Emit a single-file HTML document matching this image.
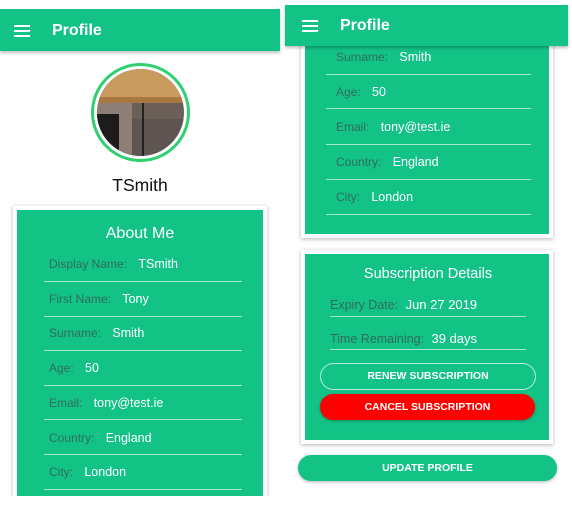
<!DOCTYPE html>
<html><head><style>
body{margin:0;width:572px;height:516px;background:#fff;position:relative;overflow:hidden;font-family:"Liberation Sans",Arial,sans-serif}
.a{position:absolute}
.hdr{background:#13c386;box-shadow:0 2px 3px rgba(0,0,0,.25);color:#fff;font-weight:bold;font-size:16px}
.hb{position:absolute;width:16px;height:2px;background:#fff}
.card{background:#13c386;border:4px solid #fff;box-shadow:0 1px 4px rgba(0,0,0,.3)}
.lab{position:absolute;font-size:12px;color:#2f6e58;white-space:nowrap}
.lab b{font-weight:normal;color:#fff;margin-left:8px;font-size:12.5px}
.ln{position:absolute;height:1px;background:rgba(255,255,255,.6)}
.btn{position:absolute;border-radius:14px;color:#fff;font-weight:bold;font-size:10.5px;text-align:center}
</style></head><body>
<div class="a card" style="left:13px;top:206px;width:246px;height:296px;"></div>
<div class="a" style="left:140px;top:225px;transform:translateX(-50%);color:#fff;font-size:16px;white-space:nowrap">About Me</div>
<div class="lab" style="left:49px;top:257px">Display Name: <b>TSmith</b></div>
<div class="ln" style="left:44px;top:281px;width:198px"></div>
<div class="lab" style="left:49px;top:292px">First Name: <b>Tony</b></div>
<div class="ln" style="left:44px;top:316px;width:198px"></div>
<div class="lab" style="left:49px;top:326px">Surname: <b>Smith</b></div>
<div class="ln" style="left:44px;top:350px;width:198px"></div>
<div class="lab" style="left:49px;top:361px">Age: <b>50</b></div>
<div class="ln" style="left:44px;top:385px;width:198px"></div>
<div class="lab" style="left:49px;top:396px">Email: <b>tony@test.ie</b></div>
<div class="ln" style="left:44px;top:419px;width:198px"></div>
<div class="lab" style="left:49px;top:431px">Country: <b>England</b></div>
<div class="ln" style="left:44px;top:454px;width:198px"></div>
<div class="lab" style="left:49px;top:465px">City: <b>London</b></div>
<div class="ln" style="left:44px;top:489px;width:198px"></div>
<div class="a" style="left:0;top:496px;width:285px;height:20px;background:#fff"></div>
<div class="a hdr" style="left:0;top:9px;width:280px;height:42px">
 <div class="hb" style="left:14px;top:16px"></div><div class="hb" style="left:14px;top:21px"></div><div class="hb" style="left:14px;top:26px"></div>
 <div class="a" style="left:52px;top:13px">Profile</div>
</div>
<div class="a" style="left:91px;top:63px;width:93px;height:93px;border-radius:50%;border:3px solid #2fd06f;background:#fff"></div>
<div class="a" style="left:97px;top:69px;width:87px;height:87px;border-radius:50%;overflow:hidden;background:#6b5f58">
 <div class="a" style="left:0;top:0;width:87px;height:28px;background:#c99a5e"></div>
 <div class="a" style="left:0;top:28px;width:87px;height:6px;background:#a8773f"></div>
 <div class="a" style="left:0;top:34px;width:35px;height:53px;background:#8d7e78"></div>
 <div class="a" style="left:0;top:45px;width:22px;height:42px;background:#1d1b1b"></div>
 <div class="a" style="left:35px;top:50px;width:52px;height:37px;background:#5e5552"></div>
 <div class="a" style="left:45px;top:34px;width:2px;height:53px;background:#222"></div>
</div>
<div class="a" style="left:140px;top:175px;transform:translateX(-50%);font-size:17.5px;color:#111">TSmith</div>

<div class="a card" style="left:301px;top:20px;width:244px;height:210px"></div>
<div class="lab" style="left:336px;top:50px">Surname: <b>Smith</b></div>
<div class="ln" style="left:326px;top:74px;width:205px"></div>
<div class="lab" style="left:336px;top:85px">Age: <b>50</b></div>
<div class="ln" style="left:326px;top:108px;width:205px"></div>
<div class="lab" style="left:336px;top:120px">Email: <b>tony@test.ie</b></div>
<div class="ln" style="left:326px;top:144px;width:205px"></div>
<div class="lab" style="left:336px;top:155px">Country: <b>England</b></div>
<div class="ln" style="left:326px;top:179px;width:205px"></div>
<div class="lab" style="left:336px;top:190px">City: <b>London</b></div>
<div class="ln" style="left:326px;top:214px;width:205px"></div>
<div class="a hdr" style="left:285px;top:5px;width:283px;height:41px">
 <div class="hb" style="left:17px;top:15px"></div><div class="hb" style="left:17px;top:20px"></div><div class="hb" style="left:17px;top:25px"></div>
 <div class="a" style="left:55px;top:12px">Profile</div>
</div>
<div class="a card" style="left:301px;top:250px;width:244px;height:186px"></div>
<div class="a" style="left:428px;top:266px;transform:translateX(-50%);color:#fff;font-size:14.5px;white-space:nowrap">Subscription Details</div>
<div class="lab" style="left:330px;top:297px;font-size:12.5px">Expiry Date: <b style="margin-left:4px;font-size:13px">Jun 27 2019</b></div>
<div class="ln" style="left:330px;top:316px;width:196px"></div>
<div class="lab" style="left:330px;top:331px;font-size:12.5px">Time Remaining: <b style="margin-left:4px;font-size:13px">39 days</b></div>
<div class="ln" style="left:330px;top:349px;width:196px"></div>
<div class="btn" style="left:320px;top:363px;width:214px;height:25px;line-height:25px;border:1px solid rgba(255,255,255,.7)">RENEW SUBSCRIPTION</div>
<div class="btn" style="left:320px;top:394px;width:215px;height:26px;line-height:26px;background:#ff0000;box-shadow:0 1px 3px rgba(0,0,0,.3)">CANCEL SUBSCRIPTION</div>
<div class="btn" style="left:298px;top:455px;width:259px;height:26px;line-height:26px;background:#13c386;box-shadow:0 1px 3px rgba(0,0,0,.3)">UPDATE PROFILE</div>
</body></html>
